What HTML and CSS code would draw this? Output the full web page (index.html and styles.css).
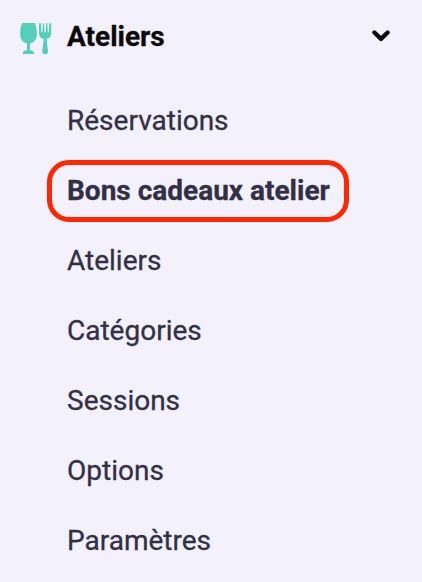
FILE: index.html
```html
<!DOCTYPE html>
<html lang="fr">
<head>
<meta charset="utf-8">
<title>Ateliers</title>
<link rel="stylesheet" href="styles.css">
</head>
<body>
<nav class="menu">
  <div class="menu-header">
    <svg class="menu-icon" viewBox="0 0 32 32" aria-hidden="true">
      <path d="M2 0H15C16.4 4 17 8 16.8 12C16.5 16.8 14 19.6 10.1 20.4V27.2C12.8 27.5 14.3 28.5 14.3 31H2.7C2.7 28.5 4.2 27.5 7 27.2V20.4C3 19.6.5 16.8.2 12C0 8 .6 4 2 0Z"/>
      <path d="M19 .2H20.9L21.4 9.2H22.4L22.9.2H24.1L24.5 9.2H25.7L26.1.2H27.3L27.8 9.2H28.8L29.3.2H31.2V10C31.2 13.6 29.6 15.3 26.8 15.8V17.8L28 28.4C28.1 30.2 27 31.2 25.1 31.2S22.2 30.2 22.3 28.4L23.5 17.8V15.8C20.7 15.3 19 13.6 19 10Z"/>
    </svg>
    <span class="menu-title">Ateliers</span>
    <svg class="menu-chevron" viewBox="0 0 18 12" aria-hidden="true">
      <path d="M2.4 2.5L9 8.9L15.6 2.5"/>
    </svg>
  </div>
  <ul class="menu-list">
    <li class="menu-item">Réservations</li>
    <li class="menu-item menu-item-active">Bons cadeaux atelier</li>
    <li class="menu-item">Ateliers</li>
    <li class="menu-item">Catégories</li>
    <li class="menu-item">Sessions</li>
    <li class="menu-item">Options</li>
    <li class="menu-item">Paramètres</li>
  </ul>
</nav>
</body>
</html>
```
FILE: styles.css
```css
* {
  box-sizing: border-box;
}

body {
  margin: 0;
  height: 582px;
  overflow: hidden;
  background: #f3f1fb;
  color: #322f47;
  font: 400 28px/40px Roboto, sans-serif;
  -webkit-text-stroke: 0.3px currentColor;
}

.menu-header {
  display: flex;
  align-items: center;
  height: 72px;
  padding: 0 32px 0 20px;
  color: #0a0a0c;
}

.menu-icon {
  width: 32px;
  height: 32px;
  margin: 6px 15px 0 0;
  fill: #55cfbb;
}

.menu-title {
  flex: 1;
  padding-top: 2px;
  font-weight: 700;
}

.menu-chevron {
  width: 18px;
  height: 12px;
  fill: none;
  stroke: currentColor;
  stroke-width: 4.3;
  stroke-linecap: round;
  stroke-linejoin: round;
}

.menu-list {
  margin: 0;
  padding: 13px 0 0 47px;
  list-style: none;
}

.menu-item {
  display: flex;
  align-items: center;
  height: 70px;
  padding: 2px 0 0 20px;
}

.menu-item-active {
  width: 302px;
  height: 62px;
  margin: 5px 0 3px;
  padding: 0 0 0 15px;
  border: 5px solid #ff2600;
  border-radius: 22px;
  font-weight: 700;
  white-space: nowrap;
}
```
